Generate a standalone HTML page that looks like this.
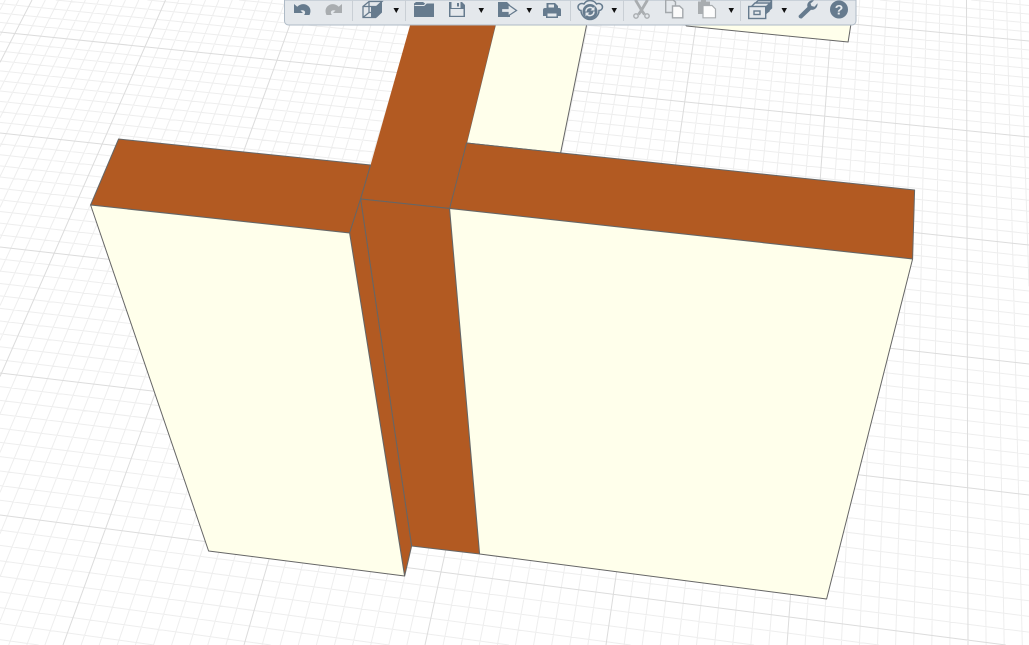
<!DOCTYPE html>
<html>
<head>
<meta charset="utf-8">
<style>
html,body{margin:0;padding:0;background:#fff;width:1029px;height:645px;overflow:hidden}
svg{position:absolute;left:0;top:0;display:block;overflow:hidden}
</style>
</head>
<body>
<svg width="1029" height="645" viewBox="0 0 1029 645" xmlns="http://www.w3.org/2000/svg">
  <path id="minor" fill="none" stroke="#eeeeee" stroke-width="1"/>
  <path id="major" fill="none" stroke="#dcdcdc" stroke-width="1"/>

  <g stroke="#666" stroke-width="1" stroke-linejoin="round" transform="translate(-0.4,0)">
    <polygon points="680,20 852,20 848.500,42 687,26" fill="#ffffeb"/>
    <polygon points="497,20 588,20 561,153 467,143" fill="#ffffeb"/>
    <polygon points="119,139 371,165 361,199 350,233 91,205" fill="#b25a22"/>
    <polygon points="412,20 497,20 467,143 451,208.500 361,199 371,165" fill="#b25a22" stroke="none"/>
    <polyline points="371,165 361,199 451,208.500 467,143" fill="none"/>
    <polygon points="467,143 915,190 913,259 450,208.500" fill="#b25a22"/>
    <polygon points="361,199 450,208.500 480,554 412,546" fill="#b25a22"/>
    <polygon points="350,233 361,199 412,546 405,576" fill="#b25a22"/>
    <polygon points="91,205 350,233 405,576 209,551" fill="#ffffeb"/>
    <polygon points="450,208.500 913,259 827,599 480,554" fill="#ffffeb"/>
  </g>

  <!-- toolbar -->
  <path d="M284.500,0 V21 a4,4 0 0 0 4,4 H852 a4,4 0 0 0 4,-4 V0 Z" fill="#e4e8ec" stroke="#aebac6" stroke-width="1"/>
  <g stroke="#c9cfd5" stroke-width="1">
    <path d="M352.500,0V21M405.500,0V21M570.500,0V21M623.500,0V21M740.500,0V21"/>
  </g>

  <!-- dropdown arrows -->
  <g fill="#111">
    <path d="M393.500,8h5.500l-2.750,5zM478.500,8h5.500l-2.750,5zM526.500,8h5.500l-2.750,5zM611.500,8h5.500l-2.750,5zM728.500,8h5.500l-2.750,5zM781.500,8h5.500l-2.750,5z"/>
  </g>

  <!-- undo -->
  <path d="M294,4V13H303L300.500,10.500C302.500,9.800 304.500,10.300 305,11.800C305.400,13 304.800,14.300 304,15H309.500C311,12 310.800,8.500 308.500,6.300C305.500,3.500 301,3.300 297.300,6.700Z" fill="#667b8e"/>
  <!-- redo -->
  <path d="M342,4V13H333L335.500,10.500C333.500,9.800 331.500,10.300 331,11.800C330.600,13 331.200,14.300 332,15H326.500C325,12 325.200,8.500 327.500,6.300C330.500,3.500 335,3.300 338.700,6.700Z" fill="#a9adb0"/>

  <!-- box -->
  <g fill="none" stroke="#667b8e" stroke-width="1.300">
    <path d="M363,6.500L369,1.500H382L376.500,6.500H363V17.500H376"/>
    <path d="M369,1.500V12.500H371M363,17.500L369,12.500"/>
  </g>
  <path d="M371,6.500H376.500L382,1.500V12.500L376.500,17.800H371Z" fill="#667b8e"/>

  <!-- folder -->
  <path d="M414,3.500L416,2H423L425,3.500H434V17H414Z" fill="#667b8e"/>
  <path d="M414.500,5.500H424L426.500,3H434" fill="none" stroke="#e4e8ec" stroke-width="1"/>

  <!-- floppy -->
  <path d="M449,2H462L465,5V17H449Z" fill="#667b8e"/>
  <rect x="451.500" y="2" width="9" height="6" fill="#e4e8ec"/>
  <rect x="457" y="3" width="2" height="3.500" fill="#667b8e"/>
  <rect x="450.500" y="9" width="13" height="6.800" fill="#e4e8ec"/>

  <!-- export -->
  <path d="M498,2H507L510,5V17H498Z" fill="#667b8e"/>
  <path d="M501.500,8.500H508V4.500L516.500,10.500L508,16V12.500H501.500Z" fill="#e4e8ec" stroke="#667b8e" stroke-width="1.300"/>
  <path d="M510,7L514.500,10.500L510,14Z" fill="#e4e8ec"/>

  <!-- printer -->
  <path d="M546.500,3H555L558,6V9H546.500Z" fill="#667b8e"/>
  <path d="M548.500,4.500H554V7.500H548.500Z" fill="#e4e8ec"/>
  <path d="M545,8H559Q561,8 561,10V16H558V13H546V16H543V10Q543,8 545,8Z" fill="#667b8e"/>
  <rect x="546" y="13" width="12" height="5" fill="#667b8e"/>
  <rect x="547.500" y="13.500" width="9" height="3" fill="#e4e8ec"/>

  <!-- sync / orbit -->
  <path d="M584,4C581,2.500 578,4.500 578,7C578,9 579.500,10.500 581,10.500C581,15 585,19.500 590,19.500C595,19.500 599,15 599,10.500C601,10.500 602.500,9 602.500,7C602.500,4.500 599.500,2.500 596.500,4C595,1.500 592,0.500 590,0.500C588,0.500 585.500,1.500 584,4Z" fill="#e4e8ec" stroke="#667b8e" stroke-width="1.500"/>
  <circle cx="590" cy="11.500" r="7.500" fill="#667b8e"/>
  <path d="M586,11.500A4,4 0 0 1 593,8.800M594,11.500A4,4 0 0 1 587,14.200" fill="none" stroke="#e4e8ec" stroke-width="1.500"/>
  <path d="M594.500,6.500V10.500H590.500ZM585.500,16.500V12.500H589.500Z" fill="#e4e8ec"/>

  <!-- scissors -->
  <g fill="none" stroke="#a9adb0">
    <path d="M635.500,0L642,11L644.500,14.500" stroke-width="2.800"/>
    <path d="M647.500,0L641,11L638.500,14.500" stroke-width="2.800"/>
    <circle cx="636" cy="16" r="2.200" stroke-width="1.400"/>
    <circle cx="647" cy="16" r="2.200" stroke-width="1.400"/>
  </g>

  <!-- copy -->
  <g fill="#e4e8ec" stroke="#a3a8ac" stroke-width="1.400">
    <path d="M665.700,0H673L675.500,2V12.500H665.700Z"/>
    <path d="M672.500,6H679.500L682.800,9V17.800H672.500Z" fill="#fbfbfb"/>
  </g>

  <!-- paste -->
  <path d="M698,1.500H701V0H706V1.500H710V14H698Z" fill="#a9adb0"/>
  <path d="M703,5.500H712L715.500,9V17.800H703Z" fill="#fdfdfd" stroke="#a9adb0" stroke-width="1.200"/>

  <!-- stack -->
  <g fill="#e4e8ec" stroke="#667b8e" stroke-width="1.400">
    <path d="M755,3.500L758,0.700H771.500V8L768,11Z"/>
    <path d="M752,6L755,3H769V11L765,14Z"/>
    <rect x="748.700" y="6.500" width="17" height="12"/>
    <rect x="754" y="11" width="6" height="3.500"/>
  </g>
  <path d="M765.500,6.500L769,3V11L765.500,15Z M769,3L771.500,0.700V8L769,11Z" fill="#667b8e"/>

  <!-- wrench -->
  <path d="M798.800,15.500L807.500,7C806.500,4 808.500,0.500 812.500,0.200L814,0.500L810.500,3.500L811.500,6L814.500,6.800L817.500,3.300C818,7.500 814.500,10.500 811,9.800L802,18.200C800.500,19.200 797.800,17.500 798.800,15.500Z" fill="#667b8e"/>

  <!-- help -->
  <circle cx="839" cy="9.500" r="9" fill="#667b8e"/>
  <text x="839" y="14.500" text-anchor="middle" font-family="Liberation Sans, sans-serif" font-size="14" font-weight="700" fill="#e9edf0">?</text>
</svg>
<script>
(function(){
  var L=[-138,-58,32,133,247,373,515,672],R=[-44,41,137,245,364,495,648,820];
  var W=1029,H=645,mi='',ma='';
  function f(a,j,t){return a[j]+t*(a[j+1]-a[j])-6.5*t*(1-t);}
  function clip(x0,y0,x1,y1){
    var t0=0,t1=1,dx=x1-x0,dy=y1-y0;
    var p=[-dx,dx,-dy,dy],q=[x0,W-x0,y0,H-y0];
    for(var i=0;i<4;i++){
      if(p[i]==0){if(q[i]<0)return '';continue;}
      var r=q[i]/p[i];
      if(p[i]<0){if(r>t1)return '';if(r>t0)t0=r;}
      else{if(r<t0)return '';if(r<t1)t1=r;}
    }
    return 'M'+(x0+t0*dx).toFixed(2)+','+(y0+t0*dy).toFixed(2)+'L'+(x0+t1*dx).toFixed(2)+','+(y0+t1*dy).toFixed(2);
  }
  for(var j=0;j<L.length-1;j++){
    for(var k=0;k<10;k++){
      var t=k/10,s=clip(0,f(L,j,t),W,f(R,j,t));
      if(k==0)ma+=s;else mi+=s;
    }
  }
  for(var n=-10;n<=80;n++){
    var i=n/10,s2=clip(32+133.5*i,0,-299+181*i,H);
    if(n%10==0)ma+=s2;else mi+=s2;
  }
  document.getElementById('minor').setAttribute('d',mi);
  document.getElementById('major').setAttribute('d',ma);
})();
</script>
</body>
</html>
